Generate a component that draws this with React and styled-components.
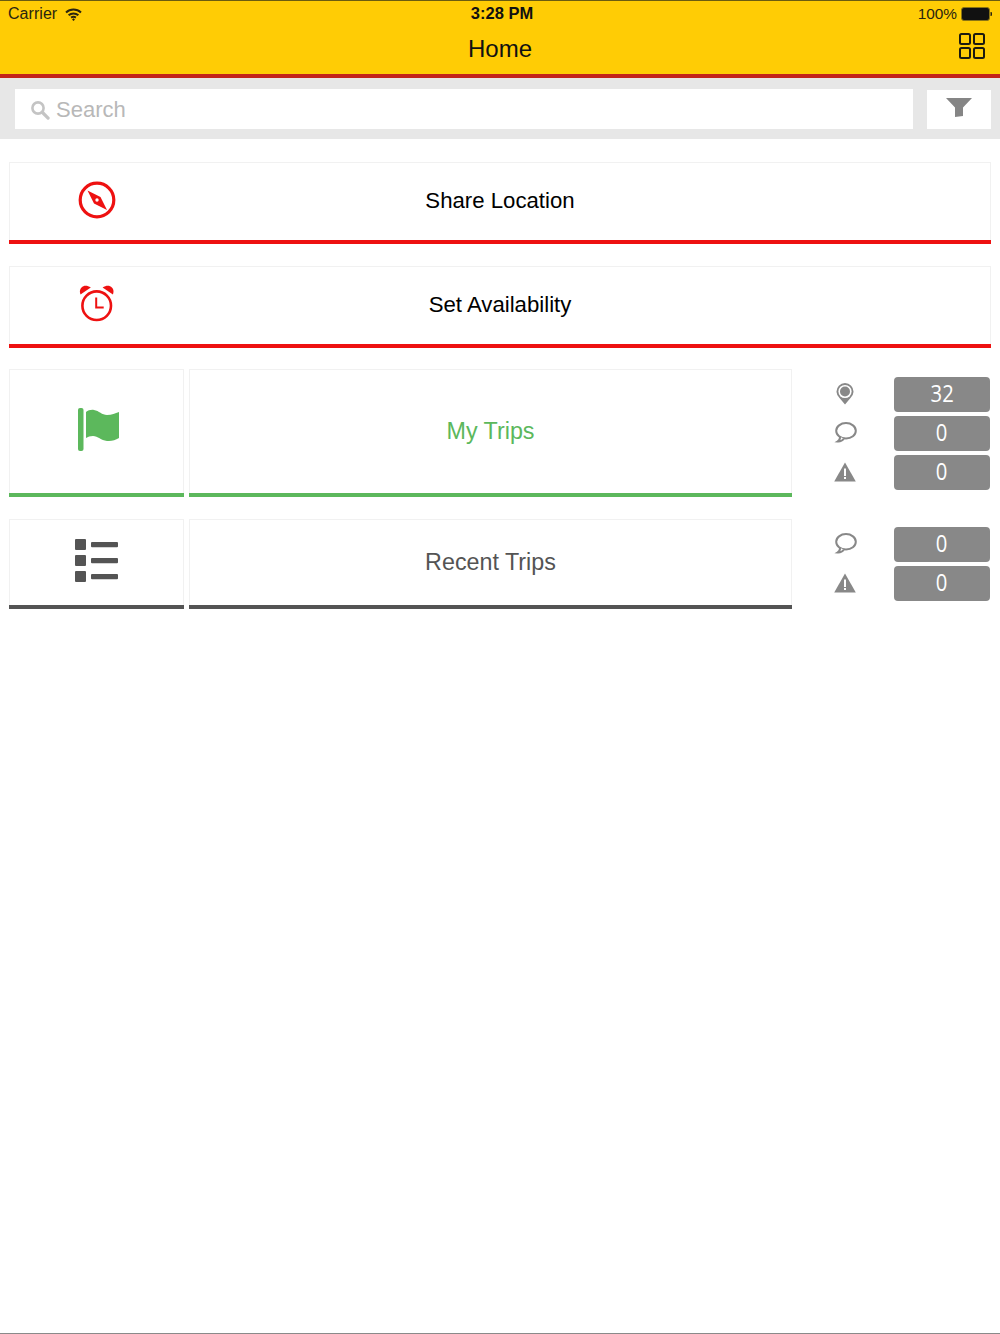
import React from 'react';
import styled, { createGlobalStyle } from 'styled-components';

const Global = createGlobalStyle`
    html, body { margin: 0; padding: 0; background: #fff; }
    * { box-sizing: border-box; }
    body { font-family: 'Liberation Sans', Arial, sans-serif; }
`;

const Page = styled.div`
    display: flex;
    flex-direction: column;
    width: 1000px;
    height: 1334px;
    border-bottom: 1px solid #8a8a8a;
`;

const Header = styled.header`
    height: 78px;
    background: #ffcc05;
    border-top: 1px solid #6b5c10;
    border-bottom: 4px solid #c3231a;
    display: flex;
    flex-direction: column;
    color: #111;
`;

const StatusBar = styled.div`
    display: grid;
    grid-template-columns: 1fr auto 1fr;
    align-items: center;
    height: 26px;
    padding: 0 8px;
    font-size: 16px;
`;

const StatusLeft = styled.div`
    display: flex;
    align-items: center;
    gap: 8px;
    color: #2a2510;
    letter-spacing: .05px;
`;

const StatusTime = styled.div`
    font-weight: bold;
    font-size: 16.5px;
    padding-left: 4px;
    margin-top: -1px;
`;

const StatusRight = styled.div`
    display: flex;
    align-items: center;
    justify-content: flex-end;
    gap: 4px;
    color: #2a2510;
    font-size: 15.4px;
    margin-top: -1px;
`;

const NavBar = styled.div`
    display: grid;
    grid-template-columns: 1fr auto 1fr;
    align-items: center;
    height: 44px;
    padding: 0 15px;
`;

const NavTitle = styled.div`
    font-size: 24px;
    margin-top: -1px;
`;

const NavAction = styled.div`
    display: flex;
    justify-content: flex-end;
    margin-top: -7px;
`;

const SearchBar = styled.div`
    height: 61px;
    background: #e7e7e7;
    display: flex;
    align-items: flex-start;
    padding: 11px 9px 0 15px;
    gap: 14px;
`;

const SearchField = styled.div`
    flex: 1;
    height: 40px;
    background: #fff;
    display: flex;
    align-items: center;
    gap: 6px;
    padding: 2px 0 0 15px;
    font-size: 22px;
    color: #b8b8b8;
`;

const FilterButton = styled.div`
    width: 64px;
    height: 39px;
    margin-top: 1px;
    background: #fff;
    display: flex;
    justify-content: center;
    padding-top: 8px;
`;

const Content = styled.main`
    display: flex;
    flex-direction: column;
    padding: 23px 9px 0;
`;

const Tile = styled.div`
    height: ${p => p.$height}px;
    box-shadow: inset 0 -4px 0 ${p => p.$color}, inset 0 0 0 1px #f1f1f1;
    padding: 1px 1px 5px;
    display: flex;
    align-items: center;
    justify-content: center;
    color: ${p => p.$text || p.$color};
    font-size: ${p => p.$size || 23.3}px;
`;

const WideTile = styled(Tile)`
    position: relative;
    margin-bottom: 21.6px;
`;

const WideIcon = styled.div`
    position: absolute;
    left: 69px;
    top: 19px;
    display: flex;
`;

const TileIcon = styled.div`
    display: flex;
    margin: -3px 0 0 ${p => p.$nudge || 0}px;
`;

const TripRow = styled.div`
    display: grid;
    grid-template-columns: 175px 603px 1fr;
    column-gap: 5px;
    margin-bottom: 22px;
`;

const Counters = styled.div`
    display: flex;
    flex-direction: column;
    gap: 4px;
    padding: 8px 1px 0 34px;
`;

const Counter = styled.div`
    display: flex;
    align-items: center;
    justify-content: space-between;
    height: 35px;
`;

const CounterIcon = styled.div`
    width: 28px;
    display: flex;
    justify-content: center;
    margin-top: -2px;
`;

const Badge = styled.div`
    width: 96px;
    height: 100%;
    background: #888;
    border-radius: 4px;
    color: #fff;
    font-family: 'Open Sans', sans-serif;
    font-size: 23px;
    padding-bottom: 4px;
    display: flex;
    align-items: center;
    justify-content: center;
`;

const BadgeValue = styled.span`
    display: block;
    transform: scaleX(.88);
`;

const Wifi = () => (
    <svg width="17" height="13" viewBox="0 0 17 13" fill="none" stroke="#2a2510" strokeWidth="2">
        <path d="M1 4.500C5.200.6 11.800.6 16 4.500" />
        <path d="M3.600 7.200c2.800-2.400 7-2.400 9.800 0" />
        <path d="M6.100 9.600c1.400-1 3.400-1 4.800 0" />
        <circle cx="8.500" cy="11.600" r=".8" fill="#2a2510" strokeWidth=".8" />
    </svg>
);

const Battery = () => (
    <svg width="31" height="14" viewBox="0 0 31 14">
        <rect x=".5" y=".5" width="28" height="13" rx="2.500" fill="#111" stroke="#8a7414" />
        <path d="M29.500 5h.6c.5 0 .9.400.9.900v2.200c0 .5-.4.900-.9.900h-.6z" fill="#2a2510" />
    </svg>
);

const GridIcon = () => (
    <svg width="26" height="26" viewBox="0 0 26 26" fill="none" stroke="#1c1a10" strokeWidth="2">
        <rect x="1" y="1" width="10" height="10" rx="1.500" />
        <rect x="15" y="1" width="10" height="10" rx="1.500" />
        <rect x="1" y="15" width="10" height="10" rx="1.500" />
        <rect x="15" y="15" width="10" height="10" rx="1.500" />
    </svg>
);

const SearchGlass = () => (
    <svg width="20" height="20" viewBox="0 0 20 20" fill="none" stroke="#c4c4c4">
        <circle cx="8" cy="8" r="5.600" strokeWidth="2.600" />
        <path d="M12.500 12.500l5.600 5.600" strokeWidth="3.200" strokeLinecap="round" />
    </svg>
);

const Funnel = () => (
    <svg width="26" height="20" viewBox="0 0 26 20">
        <path d="M0 0h26l-9 9.500V18l-8 1V9.500z" fill="#858585" />
    </svg>
);

const Compass = () => (
    <svg width="38" height="38" viewBox="0 0 38 38">
        <circle cx="19" cy="19" r="16.800" fill="none" stroke="#ee1111" strokeWidth="3.200" />
        <path d="M9.500 9.500l13 6.500 6.500 13-13-6.500z" fill="#ee1111" />
        <circle cx="19" cy="19" r="1.700" fill="#fff" />
    </svg>
);

const AlarmClock = () => (
    <svg width="38" height="38" viewBox="0 0 38 38">
        <circle cx="18.700" cy="20.700" r="14.300" fill="none" stroke="#ee1111" strokeWidth="2.600" />
        <path d="M18.200 12.500V22.500h7.500" fill="none" stroke="#ee1111" strokeWidth="2" />
        <path d="M2.500 9.500C0 3 6-2 12.800 2.500z" fill="#ee1111" />
        <path d="M34.900 9.500C37.400 3 31.400-2 24.600 2.500z" fill="#ee1111" />
    </svg>
);

const Flag = () => (
    <svg width="41" height="43" viewBox="0 0 41 43" fill="#5cb85c">
        <rect x="0" y="0" width="5.500" height="43" rx="2" />
        <path d="M8 4c2-1.500 5-2.500 8-2 5 .8 8 5 13 5 5 0 8-1.500 12-3v26c-4 2-7 3.500-12 3-6-.6-9-5-14-5-3 0-5 .8-7 2z" />
    </svg>
);

const ListIcon = () => (
    <svg width="43" height="43" viewBox="0 0 43 43" fill="#545454">
        <rect x="0" y="0" width="11" height="11" rx="1" />
        <rect x="0" y="16" width="11" height="11" rx="1" />
        <rect x="0" y="32" width="11" height="11" rx="1" />
        <rect x="16" y="3" width="27" height="5.300" rx="1" />
        <rect x="16" y="19" width="27" height="5.300" rx="1" />
        <rect x="16" y="35" width="27" height="5.300" rx="1" />
    </svg>
);

const Pin = () => (
    <svg width="18" height="22" viewBox="0 0 18 22">
        <path d="M9 21.500L3.500 15A8.500 8.500 0 1 1 14.500 15z" fill="#888" />
        <circle cx="9" cy="8.500" r="6.600" fill="#fff" />
        <circle cx="9" cy="8.500" r="5" fill="#888" />
    </svg>
);

const Bubble = () => (
    <svg width="23" height="21" viewBox="0 0 23 21" fill="none" stroke="#888" strokeWidth="2">
        <ellipse cx="12" cy="8.800" rx="9.800" ry="7.700" />
        <path d="M6 15c.2 1.800-.6 3.300-2.500 4.500 2.500.2 5-.8 6.500-3" fill="#fff" />
    </svg>
);

const Warning = () => (
    <svg width="22" height="20" viewBox="0 0 22 20">
        <path d="M11 .5L21.800 19.500H.2z" fill="#888" />
        <rect x="10" y="6.500" width="2" height="7.500" fill="#fff" />
        <rect x="10" y="15" width="2" height="2" fill="#fff" />
    </svg>
);

const icons = { pin: <Pin />, bubble: <Bubble />, warning: <Warning /> };

const CounterList = ({ items }) => (
    <Counters>
        {items.map((item, i) => (
            <Counter key={i}>
                <CounterIcon>{icons[item.icon]}</CounterIcon>
                <Badge><BadgeValue>{item.value}</BadgeValue></Badge>
            </Counter>
        ))}
    </Counters>
);

export default function App() {
    return (
        <Page>
            <Global />
            <Header>
                <StatusBar>
                    <StatusLeft>Carrier <Wifi /></StatusLeft>
                    <StatusTime>3:28 PM</StatusTime>
                    <StatusRight>100% <Battery /></StatusRight>
                </StatusBar>
                <NavBar>
                    <span />
                    <NavTitle>Home</NavTitle>
                    <NavAction><GridIcon /></NavAction>
                </NavBar>
            </Header>
            <SearchBar>
                <SearchField><SearchGlass /> Search</SearchField>
                <FilterButton><Funnel /></FilterButton>
            </SearchBar>
            <Content>
                <WideTile $height={82} $color="#ee1111" $text="#000" $size={22.2}>
                    <WideIcon><Compass /></WideIcon>
                    Share Location
                </WideTile>
                <WideTile $height={82} $color="#ee1111" $text="#000" $size={22.2}>
                    <WideIcon><AlarmClock /></WideIcon>
                    Set Availability
                </WideTile>
                <TripRow>
                    <Tile $height={128} $color="#5cb85c"><TileIcon $nudge={3}><Flag /></TileIcon></Tile>
                    <Tile $height={128} $color="#5cb85c">My Trips</Tile>
                    <CounterList items={[
                        { icon: 'pin', value: 32 },
                        { icon: 'bubble', value: 0 },
                        { icon: 'warning', value: 0 }
                    ]} />
                </TripRow>
                <TripRow>
                    <Tile $height={90} $color="#545454"><TileIcon><ListIcon /></TileIcon></Tile>
                    <Tile $height={90} $color="#545454">Recent Trips</Tile>
                    <CounterList items={[
                        { icon: 'bubble', value: 0 },
                        { icon: 'warning', value: 0 }
                    ]} />
                </TripRow>
            </Content>
        </Page>
    );
}
